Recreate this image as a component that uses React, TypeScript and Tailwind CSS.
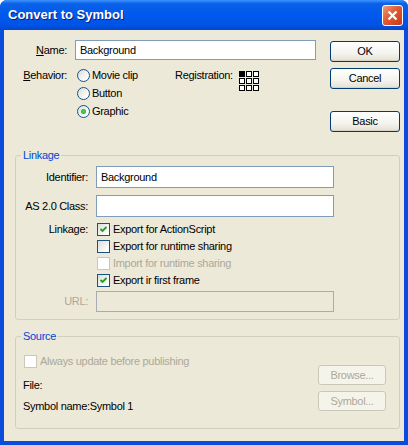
import type { ReactNode } from "react";

const font = "font-['Tahoma','Liberation_Sans',Arial,sans-serif]";

function XpButton({
  children,
  disabled = false,
  className = "",
}: {
  children: ReactNode;
  disabled?: boolean;
  className?: string;
}) {
  return (
    <button
      type="button"
      disabled={disabled}
      className={`flex items-center justify-center rounded-[3px] border text-[11px] leading-none tracking-[-0.3px] ${
        disabled
          ? "border-[#C9C7BA] bg-[#F5F4EA] text-[#ACA899]"
          : "border-[#003C74] bg-[linear-gradient(to_bottom,#ffffff_0%,#f4f3ee_60%,#e3e0d2_100%)] text-black shadow-[inset_0_-1px_0_#d6d0c5]"
      } ${className}`}
    >
      {children}
    </button>
  );
}

function Radio({ label, checked = false }: { label: string; checked?: boolean }) {
  return (
    <div className="flex h-[18px] items-center">
      <span className="flex h-[13px] w-[13px] items-center justify-center rounded-full border border-[#1C5180] bg-[linear-gradient(135deg,#dcdcd3_0%,#ffffff_80%)]">
        {checked && (
          <span className="h-[5px] w-[5px] rounded-full bg-[radial-gradient(circle,#55d551_0%,#21a121_100%)]" />
        )}
      </span>
      <span className="ml-[2px]">{label}</span>
    </div>
  );
}

function Checkbox({
  label,
  checked = false,
  disabled = false,
}: {
  label: string;
  checked?: boolean;
  disabled?: boolean;
}) {
  return (
    <div className="flex h-[17px] items-center">
      <span
        className={`flex h-[13px] w-[13px] shrink-0 items-center justify-center border ${
          disabled
            ? "border-[#CAC8BB] bg-white"
            : "border-[#1C5180] bg-[linear-gradient(135deg,#dcdcd7_0%,#ffffff_85%)]"
        }`}
      >
        {checked && (
          <svg width="9" height="9" viewBox="0 0 9 9">
            <path
              d="M1.5 4 L3.5 6 L7.5 2"
              fill="none"
              stroke="#21A121"
              strokeWidth="1.8"
            />
          </svg>
        )}
      </span>
      <span className={`ml-[3px] ${disabled ? "text-[#ACA899]" : ""}`}>{label}</span>
    </div>
  );
}

function RegistrationGrid() {
  const cells = [0, 7, 14];
  return (
    <svg width="20" height="20" viewBox="0 0 20 20">
      {cells.map((y) =>
        cells.map((x) => (
          <rect
            key={`${x}-${y}`}
            x={x + 0.5}
            y={y + 0.5}
            width="5"
            height="5"
            fill={x === 0 && y === 0 ? "#000" : "#fff"}
            stroke="#000"
            strokeWidth="1"
          />
        )),
      )}
    </svg>
  );
}

export default function App() {
  return (
    <div
      className={`flex h-[445px] w-[408px] flex-col overflow-hidden rounded-t-[7px] bg-[#0A4CDE] text-[11px] tracking-[-0.3px] text-black ${font}`}
    >
      <div className="flex h-[30px] shrink-0 items-center justify-between bg-[linear-gradient(to_bottom,#3d95ff_0%,#0a62e8_12%,#0058ee_50%,#0053e3_85%,#0046d0_100%)] pl-[8px] pr-[5px]">
        <span className="text-[13px] font-bold tracking-normal text-white [text-shadow:1px_1px_0_#0a1f80]">
          Convert to Symbol
        </span>
        <span className="flex h-[21px] w-[21px] items-center justify-center rounded-[3px] border border-white bg-[linear-gradient(135deg,#f09a7a_0%,#e15a30_45%,#c63a17_100%)]">
          <svg width="11" height="11" viewBox="0 0 11 11">
            <path d="M1.5 1.5 L9.5 9.5 M9.5 1.5 L1.5 9.5" stroke="#fff" strokeWidth="2.2" />
          </svg>
        </span>
      </div>

      <div className="mx-[4px] mb-[4px] flex flex-1 flex-col bg-[#ECE9D8]">
        <div className="flex pt-[10px]">
          <div className="flex flex-1 flex-col">
            <div className="flex h-[20px] items-center">
              <span className="w-[63px] text-right">
                <span className="underline">N</span>ame:
              </span>
              <input
                readOnly
                value="Background"
                className="ml-[8px] h-[20px] w-[241px] border border-[#7F9DB9] bg-white px-[4px] text-[11px] outline-none"
              />
            </div>
            <div className="mt-[6px] flex items-start">
              <span className="flex h-[18px] w-[63px] items-center justify-end">
                <span className="underline">B</span>ehavior:
              </span>
              <div className="ml-[10px] flex w-[98px] flex-col">
                <Radio label="Movie clip" />
                <Radio label="Button" />
                <Radio label="Graphic" checked />
              </div>
              <span className="flex h-[18px] items-center">Registration:</span>
              <span className="ml-[6px] mt-[5px]">
                <RegistrationGrid />
              </span>
            </div>
          </div>
          <div className="mr-[4px] flex w-[70px] flex-col pt-[1px]">
            <XpButton className="h-[21px] w-[70px]">OK</XpButton>
            <XpButton className="mt-[6px] h-[21px] w-[70px]">Cancel</XpButton>
            <XpButton className="mt-[22px] h-[21px] w-[70px]">Basic</XpButton>
          </div>
        </div>

        <fieldset className="ml-[11px] mr-[4px] mt-[17px] rounded-[3px] border border-[#D0D0BF] pb-[7px]">
          <legend className="ml-[5px] px-[2px] leading-[13px] text-[#0046D5]">Linkage</legend>
          <div className="flex flex-col pt-[4px]">
            <div className="flex items-center">
              <span className="w-[72px] text-right">Identifier:</span>
              <input
                readOnly
                value="Background"
                className="ml-[8px] h-[22px] w-[238px] border border-[#7F9DB9] bg-white px-[4px] text-[11px] outline-none"
              />
            </div>
            <div className="mt-[7px] flex items-center">
              <span className="w-[72px] text-right">AS 2.0 Class:</span>
              <input
                readOnly
                value=""
                className="ml-[8px] h-[22px] w-[238px] border border-[#7F9DB9] bg-white px-[4px] text-[11px] outline-none"
              />
            </div>
            <div className="mt-[4px] flex items-start">
              <span className="flex h-[17px] w-[72px] items-center justify-end">Linkage:</span>
              <div className="ml-[9px] flex flex-col">
                <Checkbox label="Export for ActionScript" checked />
                <Checkbox label="Export for runtime sharing" />
                <Checkbox label="Import for runtime sharing" disabled />
                <Checkbox label="Export ir first frame" checked />
              </div>
            </div>
            <div className="mt-[2px] flex items-center">
              <span className="w-[72px] text-right text-[#ACA899]">URL:</span>
              <input
                readOnly
                disabled
                value=""
                className="ml-[8px] h-[21px] w-[238px] border border-[#A5ACB2] bg-[#ECE9D8] text-[11px] outline-none"
              />
            </div>
          </div>
        </fieldset>

        <fieldset className="ml-[11px] mr-[4px] mt-[10px] rounded-[3px] border border-[#D0D0BF] pb-[15px]">
          <legend className="ml-[5px] px-[2px] leading-[13px] text-[#0046D5]">Source</legend>
          <div className="mt-[10px] flex pl-[7px] pr-[13px]">
            <div className="flex flex-1 flex-col">
              <div className="ml-[1px]">
                <Checkbox label="Always update before publishing" disabled />
              </div>
              <span className="mt-[8px] leading-[14px]">File:</span>
              <span className="mt-[7px] leading-[14px]">Symbol name:Symbol 1</span>
            </div>
            <div className="flex flex-col pt-[12px]">
              <XpButton disabled className="h-[20px] w-[68px]">
                Browse...
              </XpButton>
              <XpButton disabled className="mt-[6px] h-[20px] w-[68px]">
                Symbol...
              </XpButton>
            </div>
          </div>
        </fieldset>
      </div>
    </div>
  );
}
